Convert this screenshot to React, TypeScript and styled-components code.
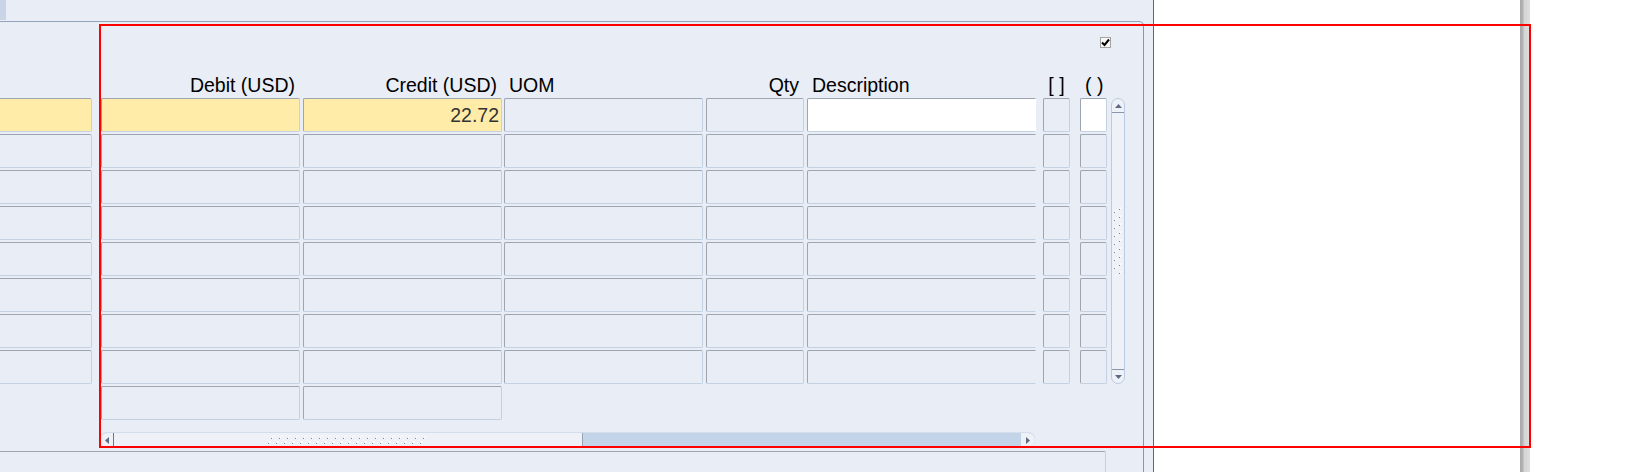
import React from 'react';
import styled, { createGlobalStyle } from 'styled-components';

const BG = '#e9edf5';

const GlobalStyle = createGlobalStyle`
  html, body { margin: 0; padding: 0; background: #ffffff; }
  body { font-family: "Liberation Sans", Arial, Helvetica, sans-serif; }
`;

const Screen = styled.div`
  position: relative;
  width: 1631px;
  height: 472px;
  overflow: hidden;
  display: flex;
  background: #ffffff;
`;

const FormPane = styled.div`
  flex: none;
  width: 1153px;
  height: 100%;
  background: ${BG};
  border-right: 1px solid #4f6a9a;
  display: flex;
  flex-direction: column;
  overflow: hidden;
`;

const TopStrip = styled.div`
  flex: none;
  height: 21px;
  display: flex;
`;

const TabStub = styled.div`
  width: 6px;
  height: 20px;
  background: #c9d5e7;
`;

const Frame = styled.div`
  flex: 1;
  box-sizing: border-box;
  width: 1164px;
  margin-left: -20px;
  border-top: 1px solid #94a3bc;
  border-right: 1px solid #8397b9;
  border-top-right-radius: 5px;
  display: flex;
  flex-direction: column;
`;

const CheckRow = styled.div`
  box-sizing: border-box;
  height: 26px;
  padding: 15px 32px 0 0;
  display: flex;
  justify-content: flex-end;
`;

const CheckBox = styled.div`
  box-sizing: border-box;
  width: 11px;
  height: 11px;
  border: 1px solid #a3a3a3;
  background: #f7f7f7;
  display: flex;
  align-items: center;
  justify-content: center;
`;

const HeaderRow = styled.div`
  display: flex;
  margin-top: 26px;
  height: 22px;
`;

const HeaderCell = styled.div<{ $w: number; $ml: number; $align: string }>`
  flex: none;
  box-sizing: border-box;
  width: ${(p) => p.$w}px;
  margin-left: ${(p) => p.$ml}px;
  padding: 0 5px;
  text-align: ${(p) => p.$align};
  font-size: 19.5px;
  line-height: 22px;
  color: #000;
  white-space: nowrap;
`;

const Body = styled.div`
  display: flex;
  align-items: flex-start;
  margin-top: 2px;
`;

const Rows = styled.div`
  display: flex;
  flex-direction: column;
  gap: 2px;
`;

const Row = styled.div`
  display: flex;
  height: 34px;
`;

type Tone = 'plain' | 'yellow' | 'white' | 'ghost';

const Field = styled.div<{ $w: number; $ml: number; $tone: Tone; $clip?: boolean }>`
  flex: none;
  box-sizing: border-box;
  width: ${(p) => p.$w}px;
  margin-left: ${(p) => p.$ml}px;
  height: 34px;
  border: 1px solid;
  border-color: ${(p) =>
    p.$tone === 'ghost'
      ? 'transparent'
      : `#9ea5b0 ${p.$clip ? 'transparent' : '#c4d1e3'} #c4d1e3 #9ea5b0`};
  border-radius: ${(p) => (p.$clip ? '2px 0 0 2px' : '2px')};
  background: ${(p) =>
    p.$tone === 'yellow' ? '#ffeca9' : p.$tone === 'white' ? '#ffffff' : p.$tone === 'ghost' ? 'transparent' : BG};
  display: flex;
  align-items: center;
  justify-content: flex-end;
  padding: 0 2px;
  font-size: 19.5px;
  color: #333333;
`;

const VScroll = styled.div`
  flex: none;
  margin-left: 4px;
  box-sizing: border-box;
  width: 14px;
  height: 286px;
  border: 1px solid #bccbe0;
  border-radius: 7px;
  background: #eef1f7;
  display: flex;
  flex-direction: column;
  overflow: hidden;
`;

const VButton = styled.div<{ $pos: 'top' | 'bottom' }>`
  flex: none;
  height: 13px;
  display: flex;
  align-items: center;
  justify-content: center;
  ${(p) => (p.$pos === 'top' ? 'border-bottom: 1px solid #8b96aa;' : 'border-top: 1px solid #8b96aa;')}
`;

const VThumb = styled.div`
  flex: 1;
  display: flex;
  align-items: center;
  justify-content: center;
`;

const HScroll = styled.div`
  margin: 12px 0 0 120px;
  box-sizing: border-box;
  width: 935px;
  height: 15px;
  display: flex;
  background: #c3d3e8;
  border-top: 1px solid #d3ddeb;
  border-radius: 7px;
  overflow: hidden;
`;

const HButton = styled.div<{ $pos: 'left' | 'right' }>`
  flex: none;
  width: ${(p) => (p.$pos === 'left' ? 13 : 14)}px;
  background: #eef1f7;
  display: flex;
  align-items: center;
  justify-content: center;
  border-radius: ${(p) => (p.$pos === 'left' ? '7px 0 0 7px' : '0 7px 7px 0')};
`;

const HThumb = styled.div`
  flex: none;
  box-sizing: border-box;
  width: 470px;
  background: #eef1f7;
  border-left: 1px solid #6d7587;
  border-right: 1px solid #9aa3b4;
  display: flex;
  align-items: center;
  justify-content: center;
`;

const HTrack = styled.div`
  flex: 1;
`;

const BottomField = styled.div`
  margin: 4px 0 0 9px;
  box-sizing: border-box;
  width: 1117px;
  height: 30px;
  border: 1px solid;
  border-color: #9ea5b0 #c4d1e3 #c4d1e3 #9ea5b0;
  border-radius: 2px;
`;

const WhiteGap = styled.div`
  flex: none;
  width: 366px;
  background: #ffffff;
`;

const GrayBar = styled.div`
  flex: none;
  width: 10px;
  background: linear-gradient(to right, #a8a8a8 0px, #b4b4b4 3px, #d4d4d4 4px, #dedede 100%);
`;

const Rest = styled.div`
  flex: 1;
  background: #ffffff;
`;

const RedMark = styled.div`
  position: absolute;
  left: 99px;
  top: 24px;
  width: 1432px;
  height: 424px;
  box-sizing: border-box;
  border: 2px solid #ff0000;
  pointer-events: none;
`;

type Col = { key: string; label: string; w: number; ml: number; align: string };

const cols: Col[] = [
  { key: 'acct', label: '', w: 102, ml: 10, align: 'left' },
  { key: 'debit', label: 'Debit (USD)', w: 199, ml: 9, align: 'right' },
  { key: 'credit', label: 'Credit (USD)', w: 199, ml: 3, align: 'right' },
  { key: 'uom', label: 'UOM', w: 199, ml: 2, align: 'left' },
  { key: 'qty', label: 'Qty', w: 98, ml: 3, align: 'right' },
  { key: 'desc', label: 'Description', w: 229, ml: 3, align: 'left' },
  { key: 'f1', label: '[ ]', w: 27, ml: 7, align: 'center' },
  { key: 'f2', label: '( )', w: 27, ml: 10, align: 'center' },
];

const toneFor = (row: number, key: string): Tone => {
  if (row === 8) return key === 'debit' || key === 'credit' ? 'plain' : 'ghost';
  if (row === 0) {
    if (key === 'acct' || key === 'debit' || key === 'credit') return 'yellow';
    if (key === 'desc' || key === 'f2') return 'white';
  }
  return 'plain';
};

const Arrow = ({ dir }: { dir: 'up' | 'down' | 'left' | 'right' }) => {
  const pts =
    dir === 'up'
      ? '0,4 7,4 3.5,0'
      : dir === 'down'
      ? '0,0 7,0 3.5,4'
      : dir === 'left'
      ? '4,0 4,7 0,3.5'
      : '0,0 0,7 4,3.5';
  const horizontal = dir === 'up' || dir === 'down';
  return (
    <svg width={horizontal ? 7 : 4} height={horizontal ? 4 : 7} viewBox={horizontal ? '0 0 7 4' : '0 0 4 7'}>
      <polygon points={pts} fill="#5f6a80" />
    </svg>
  );
};

const GripMark = ({ x, y }: { x: number; y: number }) => (
  <g>
    <rect x={x + 2} y={y} width={1} height={1} fill="#ffffff" />
    <rect x={x + 1} y={y + 1} width={1} height={1} fill="#ffffff" />
    <rect x={x} y={y + 2} width={1} height={1} fill="#7b879b" />
  </g>
);

const GripH = () => (
  <svg width="160" height="8" viewBox="0 0 160 8">
    {Array.from({ length: 20 }).map((_, i) => (
      <g key={i}>
        <GripMark x={i * 8 + 3} y={0} />
        <GripMark x={i * 8} y={5} />
      </g>
    ))}
  </svg>
);

const GripV = () => (
  <svg width="8" height="68" viewBox="0 0 8 68">
    {Array.from({ length: 9 }).map((_, i) => (
      <g key={i}>
        <GripMark x={5} y={i * 8} />
        <GripMark x={0} y={i * 8 + 3} />
      </g>
    ))}
  </svg>
);

export default function App() {
  return (
    <>
      <GlobalStyle />
      <Screen>
        <FormPane>
          <TopStrip>
            <TabStub />
          </TopStrip>
          <Frame>
            <CheckRow>
              <CheckBox>
                <svg width="9" height="9" viewBox="0 0 9 9">
                  <polyline points="1,4.5 3.5,7 8,1.5" fill="none" stroke="#000" strokeWidth="2" />
                </svg>
              </CheckBox>
            </CheckRow>
            <HeaderRow>
              {cols.map((c) => (
                <HeaderCell key={c.key} $w={c.w} $ml={c.ml} $align={c.align}>
                  {c.label}
                </HeaderCell>
              ))}
            </HeaderRow>
            <Body>
              <Rows>
                {Array.from({ length: 9 }).map((_, r) => (
                  <Row key={r}>
                    {cols.map((c) => (
                      <Field key={c.key} $w={c.w} $ml={c.ml} $tone={toneFor(r, c.key)} $clip={c.key === 'desc'}>
                        {r === 0 && c.key === 'credit' ? '22.72' : null}
                      </Field>
                    ))}
                  </Row>
                ))}
              </Rows>
              <VScroll>
                <VButton $pos="top">
                  <Arrow dir="up" />
                </VButton>
                <VThumb>
                  <GripV />
                </VThumb>
                <VButton $pos="bottom">
                  <Arrow dir="down" />
                </VButton>
              </VScroll>
            </Body>
            <HScroll>
              <HButton $pos="left">
                <Arrow dir="left" />
              </HButton>
              <HThumb>
                <GripH />
              </HThumb>
              <HTrack />
              <HButton $pos="right">
                <Arrow dir="right" />
              </HButton>
            </HScroll>
            <BottomField />
          </Frame>
        </FormPane>
        <WhiteGap />
        <GrayBar />
        <Rest />
        <RedMark />
      </Screen>
    </>
  );
}
